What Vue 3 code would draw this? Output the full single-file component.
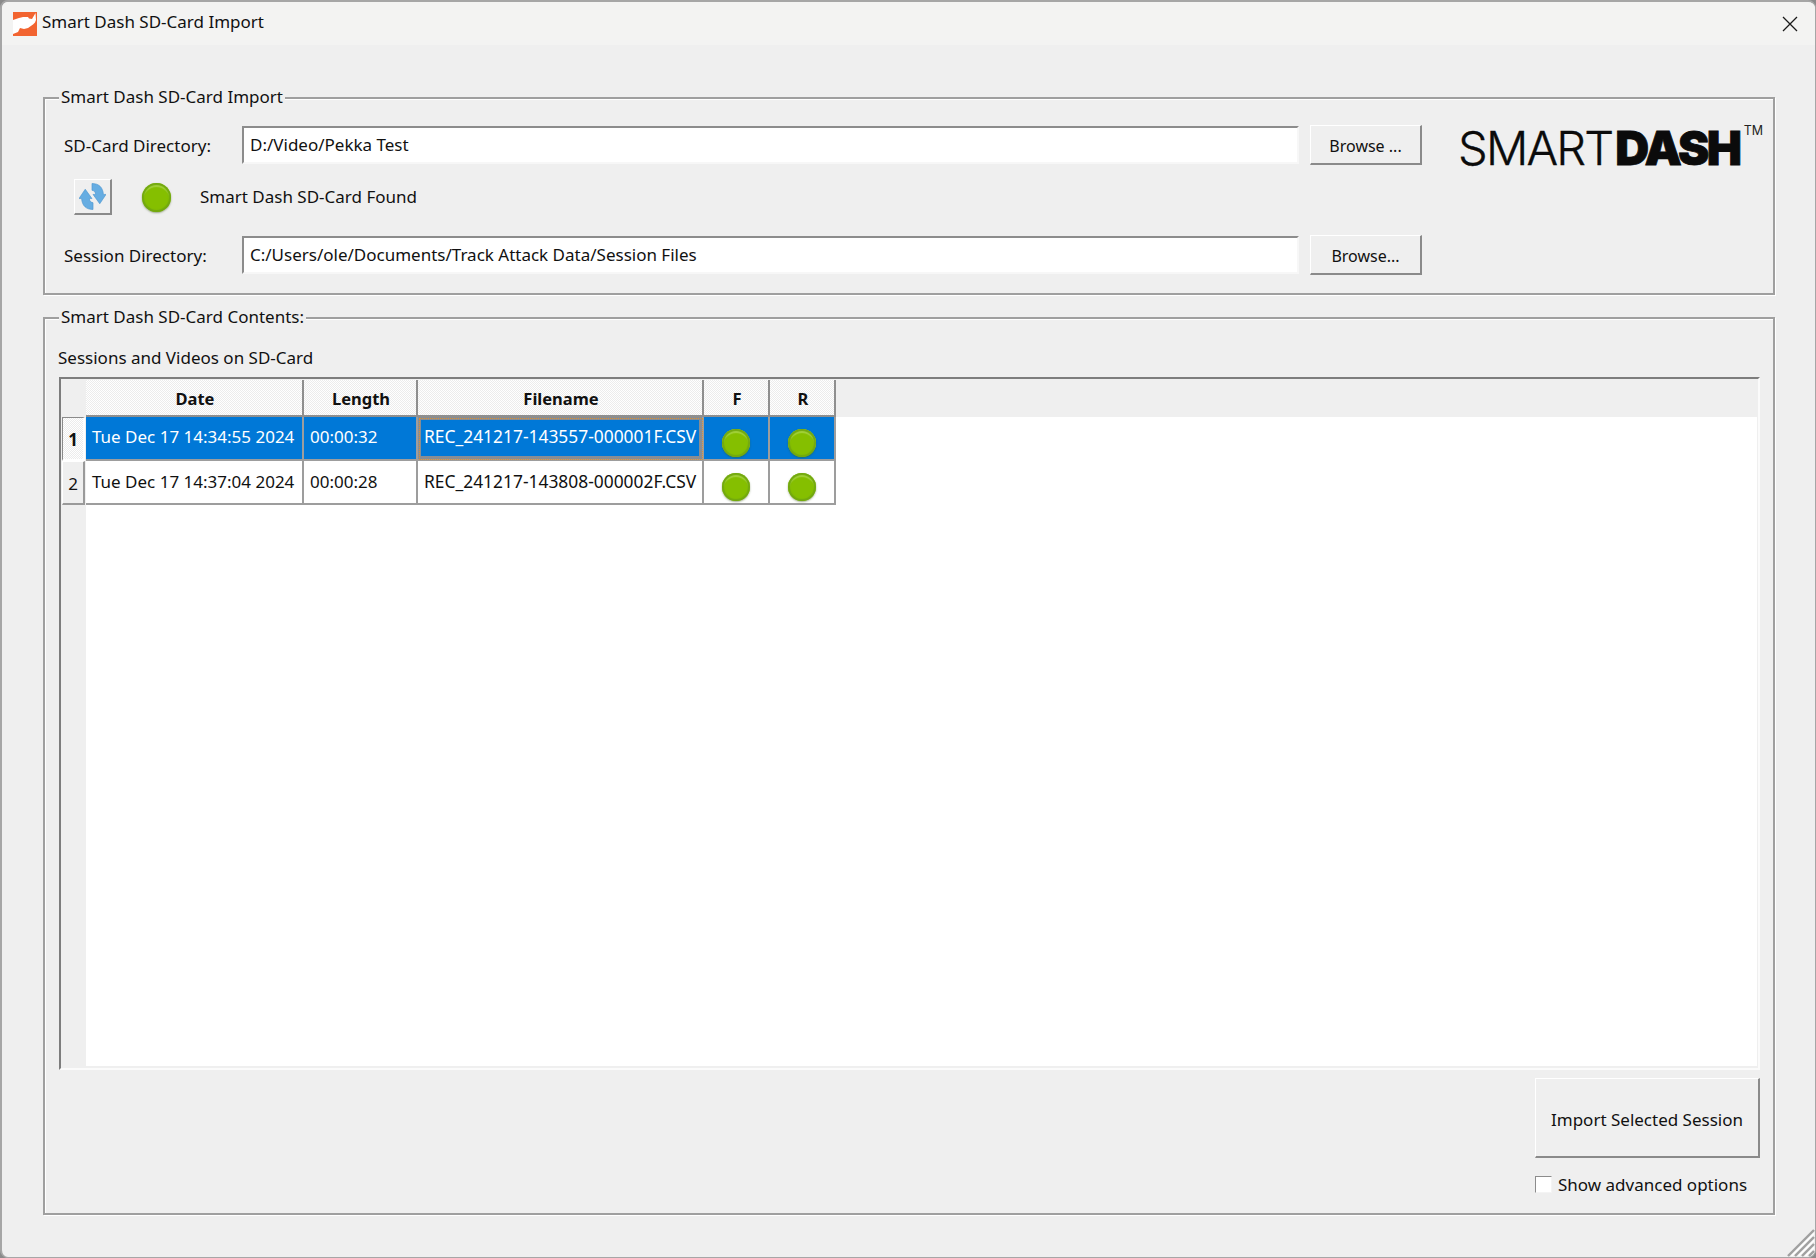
<script setup>
const rows = [
  { n: 1, date: 'Tue Dec 17 14:34:55 2024', len: '00:00:32', file: 'REC_241217-143557-000001F.CSV', sel: true },
  { n: 2, date: 'Tue Dec 17 14:37:04 2024', len: '00:00:28', file: 'REC_241217-143808-000002F.CSV', sel: false },
]
</script>

<template>
  <div class="window">
    <header class="titlebar">
      <svg class="app-icon" width="24" height="24" viewBox="0 0 24 24">
        <rect width="24" height="24" fill="#f26430" />
        <path d="M0 8 L6 6 L10 5 L15 5 L16 6.500 L19 7 L22.500 1 L23 8 L22 10.500 L20 12.500 L15 16 L11 17 L7 16 L5 20 L0 22 Z" fill="#fff" />
      </svg>
      <span class="title">Smart Dash SD-Card Import</span>
      <svg class="close" width="16" height="16" viewBox="0 0 16 16">
        <path d="M1 1 L15 15 M15 1 L1 15" stroke="#1a1a1a" stroke-width="1.3" fill="none" />
      </svg>
    </header>

    <main class="content">
      <section class="group group-top">
        <span class="legend">Smart Dash SD-Card Import</span>
        <div class="form">
          <div class="row row-dir">
            <label class="lbl">SD-Card Directory:</label>
            <div class="input">D:/Video/Pekka Test</div>
            <button class="btn browse">Browse ...</button>
          </div>
          <div class="row row-status">
            <button class="btn refresh">
              <svg width="27" height="27" viewBox="0 0 26 26">
                <path d="M12.500 .5 C19 .5 23 4 23.500 11 L26 11 L20 20 L13.500 11 L16 11 C16 9 15 7.500 12.500 7 Z" fill="#66ade2" stroke="#4a94cf" stroke-width=".6" />
                <path d="M13.500 25.500 C7 25.500 3 22 2.500 15 L0 15 L6 6 L12.500 15 L10 15 C10 17 11 18.500 13.500 19 Z" fill="#66ade2" stroke="#4a94cf" stroke-width=".6" />
              </svg>
            </button>
            <span class="led led-status"></span>
            <span class="status">Smart Dash SD-Card Found</span>
          </div>
          <div class="row row-dir">
            <label class="lbl">Session Directory:</label>
            <div class="input">C:/Users/ole/Documents/Track Attack Data/Session Files</div>
            <button class="btn browse">Browse...</button>
          </div>
        </div>
        <div class="logo">
          <span class="logo-thin">SMART</span>
          <span class="logo-bold">DASH</span>
          <span class="logo-tm">TM</span>
        </div>
      </section>

      <section class="group group-list">
        <span class="legend">Smart Dash SD-Card Contents:</span>
        <div class="caption">Sessions and Videos on SD-Card</div>
        <div class="table">
          <div class="thead">
            <div class="corner"></div>
            <div class="th c-date">Date</div>
            <div class="th c-len">Length</div>
            <div class="th c-file">Filename</div>
            <div class="th c-led">F</div>
            <div class="th c-led">R</div>
          </div>
          <div class="tbody">
            <div class="gutter">
              <div v-for="r in rows" :key="r.n" class="rowhead" :class="{ active: r.sel }">{{ r.n }}</div>
            </div>
            <div class="cells">
              <div v-for="r in rows" :key="r.n" class="tr" :class="{ sel: r.sel }">
                <div class="td c-date">{{ r.date }}</div>
                <div class="td c-len">{{ r.len }}</div>
                <div class="td c-file" :class="{ focus: r.sel }">{{ r.file }}</div>
                <div class="td c-led ledcell"><span class="led"></span></div>
                <div class="td c-led ledcell"><span class="led"></span></div>
              </div>
            </div>
          </div>
        </div>
        <div class="actions">
          <button class="btn import">Import Selected Session</button>
          <label class="check"><span class="box"></span>Show advanced options</label>
        </div>
      </section>
    </main>

    <svg class="grip" width="28" height="28" viewBox="0 0 28 28">
      <path d="M27 1 L1 27 M27 8 L8 27 M27 15 L15 27 M27 22 L22 27" stroke="#a0a0a0" stroke-width="2.400" fill="none" />
      <path d="M27 4.500 L4.500 27 M27 11.500 L11.500 27 M27 18.500 L18.500 27" stroke="#fff" stroke-width="1.400" fill="none" />
    </svg>
  </div>
</template>

<style>
html, body {
  margin: 0;
  background: #8a8a8a;
}
</style>

<style scoped>
.window {
  position: relative;
  box-sizing: border-box;
  width: 1816px;
  height: 1258px;
  overflow: hidden;
  display: flex;
  flex-direction: column;
  background: #efefef;
  border: 2px solid #a6a6a6;
  border-bottom-width: 1px;
  border-right-width: 1px;
  border-radius: 8px;
  font-family: "Noto Sans", "Open Sans", sans-serif;
  font-size: 17px;
  color: #111;
}
.titlebar {
  height: 43px;
  flex: none;
  display: flex;
  align-items: center;
  padding-left: 11px;
  padding-right: 17px;
  background: #f3f3f2;
}
.app-icon { flex: none; }
.title { margin-left: 5px; margin-bottom: 4px; }
.close { margin-left: auto; }

.content {
  flex: 1;
  display: flex;
  flex-direction: column;
  gap: 22px;
  padding: 52px 40px 42px 41px;
  min-height: 0;
}
.group {
  position: relative;
  box-sizing: border-box;
  border: 2px solid #9f9f9f;
  box-shadow: inset 1px 1px 0 #fff, 1px 1px 0 #fff;
}
.legend {
  position: absolute;
  left: 14px;
  top: -13px;
  padding: 0 2px;
  line-height: 22px;
  background: #efefef;
  white-space: nowrap;
}
.group-top {
  height: 198px;
  flex: none;
  display: flex;
  padding-top: 26px;
}
.form {
  width: 1377px;
  flex: none;
  display: flex;
  flex-direction: column;
}
.row {
  display: flex;
  align-items: center;
}
.row-dir { height: 40px; }
.row-status {
  height: 36px;
  margin: 14px 0 20px 0;
}
.lbl {
  width: 197px;
  flex: none;
  box-sizing: border-box;
  padding-left: 19px;
}
.input {
  flex: 1;
  box-sizing: border-box;
  height: 38px;
  line-height: 34px;
  padding-left: 6px;
  background: #fff;
  border: 2px solid;
  border-color: #8c8c8c #f7f7f7 #f7f7f7 #8c8c8c;
}
.btn {
  font: inherit;
  color: inherit;
  padding: 0;
  background: #efefef;
  border: 1px solid #fff;
  border-right: 2px solid #8a8a8a;
  border-bottom: 2px solid #8a8a8a;
  box-sizing: border-box;
}
.browse {
  width: 112px;
  height: 40px;
  margin-left: 11px;
  flex: none;
  font-size: 16px;
  padding-top: 2px;
}
.refresh {
  width: 38px;
  height: 36px;
  margin-left: 29px;
  display: flex;
  align-items: center;
  justify-content: center;
}
.led {
  display: block;
  box-sizing: border-box;
  width: 28px;
  height: 28px;
  border-radius: 50%;
  background: #85bf00;
  box-shadow:
    inset 0 0 1px 2px #72a80f,
    inset 0 3px 1px 1px rgba(190, 225, 110, .55),
    0 1px 2px rgba(60, 90, 20, .5);
}
.led-status {
  margin-left: 30px;
  width: 29px;
  height: 29px;
}
.status { margin-left: 29px; margin-bottom: 1px; }

.logo {
  flex: none;
  display: flex;
  align-items: flex-start;
  height: 46px;
  margin-left: 36px;
  margin-top: -1px;
  font-family: Inter, "Liberation Sans", sans-serif;
  color: #0b0b0b;
}
.logo-thin {
  font-weight: 300;
  font-size: 47px;
  line-height: 47px;
  letter-spacing: -1.800px;
  -webkit-text-stroke: .35px #0b0b0b;
}
.logo-bold {
  margin-left: 3px;
  font-weight: 900;
  font-size: 47px;
  line-height: 47px;
  letter-spacing: -2.500px;
  -webkit-text-stroke: .8px #0b0b0b;
}
.logo-tm {
  margin-left: 4px;
  font-weight: 400;
  font-size: 12.500px;
  line-height: 14px;
  color: #222;
}

.group-list {
  flex: 1;
  display: flex;
  flex-direction: column;
  padding: 0 13px 0 14px;
  min-height: 0;
}
.caption {
  line-height: 22px;
  margin-top: 28px;
  margin-left: -1px;
  margin-bottom: 8px;
}
.table {
  height: 693px;
  flex: none;
  box-sizing: border-box;
  display: flex;
  flex-direction: column;
  border: 2px solid;
  border-color: #7d7d7d #fbfbfb #fbfbfb #7d7d7d;
  background: #efefef;
  padding: 1px 1px 2px 0;
}
.thead {
  height: 37px;
  flex: none;
  display: flex;
}
.corner { width: 25px; flex: none; }
.th {
  box-sizing: border-box;
  display: flex;
  align-items: center;
  justify-content: center;
  padding: 2px 0 0 2px;
  font-weight: 700;
  font-size: 16.500px;
  background: repeating-conic-gradient(#fff 0 25%, #ececec 0 50%) 0 0 / 2px 2px;
  border-right: 2px solid #8f8f8f;
  border-bottom: 2px solid #8f8f8f;
}
.c-date { width: 218px; flex: none; }
.c-len { width: 114px; flex: none; }
.c-file { width: 286px; flex: none; }
.c-led { width: 66px; flex: none; }

.tbody {
  flex: 1;
  display: flex;
  min-height: 0;
}
.gutter {
  width: 25px;
  flex: none;
  box-sizing: border-box;
  padding-left: 1px;
}
.rowhead {
  box-sizing: border-box;
  width: 23px;
  height: 44px;
  display: flex;
  align-items: center;
  justify-content: center;
  background: #efefef;
  border-top: 1px solid #fff;
  border-left: 1px solid #fff;
  border-right: 2px solid #9a9a9a;
  border-bottom: 2px solid #9a9a9a;
  padding-top: 2px;
}
.rowhead.active {
  font-weight: 700;
  background: repeating-conic-gradient(#fff 0 25%, #ececec 0 50%) 0 0 / 2px 2px;
  border-top-color: #8a8a8a;
  border-left-color: #8a8a8a;
  border-right-color: #fff;
  border-bottom-color: #fff;
}
.cells {
  flex: 1;
  background: #fff;
}
.tr {
  display: flex;
  height: 44px;
}
.td {
  box-sizing: border-box;
  height: 44px;
  padding-left: 6px;
  line-height: 41px;
  white-space: nowrap;
  border-right: 2px solid #9d9d9d;
  border-bottom: 2px solid #9d9d9d;
}
.td.c-file { font-size: 17.400px; }
.tr.sel .td {
  background: #0078d7;
  color: #fff;
  line-height: 39px;
}
.td.focus {
  box-shadow: inset 0 0 0 3px #878d94;
  outline: 1px dotted #e09030;
  outline-offset: -2px;
}
.tr .ledcell {
  padding: 12px 0 0 18px;
  line-height: normal;
}

.actions {
  align-self: flex-end;
  width: 225px;
  margin-top: 8px;
  display: flex;
  flex-direction: column;
}
.import {
  width: 225px;
  height: 80px;
  flex: none;
  padding-top: 3px;
}
.check {
  display: flex;
  align-items: center;
  margin-top: 16px;
  line-height: 22px;
  white-space: nowrap;
}
.box {
  box-sizing: border-box;
  width: 17px;
  height: 17px;
  margin-right: 6px;
  margin-top: -2px;
  background: #fff;
  border: 1px solid;
  border-color: #8c8c8c #f4f4f4 #f4f4f4 #8c8c8c;
}
.grip {
  position: absolute;
  right: 0;
  bottom: 0;
}
</style>
